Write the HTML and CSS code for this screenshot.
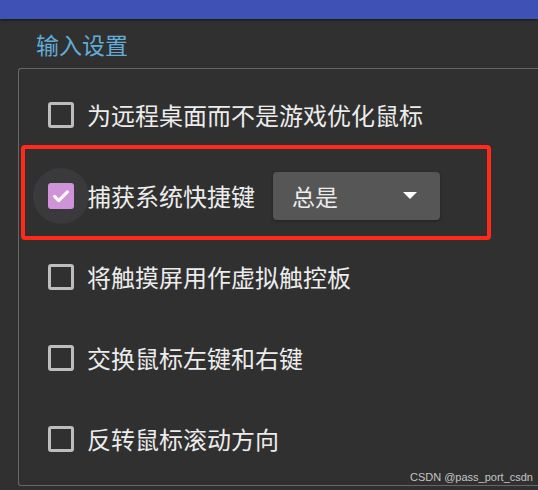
FILE: index.html
```html
<!DOCTYPE html>
<html lang="zh">
<head>
<meta charset="utf-8">
<link rel="stylesheet" href="styles.css">
</head>
<body>
<div class="appbar"></div>
<div class="title">输入设置</div>
<div class="group">
  <div class="row">
    <span class="box"></span>
    <span class="label">为远程桌面而不是游戏优化鼠标</span>
  </div>
  <div class="row">
    <span class="box-wrap">
      <span class="ripple"></span>
      <span class="box checked">
        <svg viewBox="0 0 24 24" width="22" height="22"><path d="M5 12.5l4.5 4.5L19 7.5" fill="none" stroke="#fff" stroke-width="3.4" stroke-linecap="round" stroke-linejoin="round"/></svg>
      </span>
    </span>
    <span class="label">捕获系统快捷键</span>
    <div class="select">
      <span class="select-text">总是</span>
      <span class="arrow"></span>
    </div>
  </div>
  <div class="row">
    <span class="box"></span>
    <span class="label">将触摸屏用作虚拟触控板</span>
  </div>
  <div class="row">
    <span class="box"></span>
    <span class="label">交换鼠标左键和右键</span>
  </div>
  <div class="row">
    <span class="box"></span>
    <span class="label">反转鼠标滚动方向</span>
  </div>
</div>
<div class="highlight"></div>
<div class="watermark">CSDN @pass_port_csdn</div>
</body>
</html>
```

FILE: styles.css
```css
html, body {
  margin: 0;
  padding: 0;
}
body {
  background: #303030;
  width: 538px;
  height: 490px;
  overflow: hidden;
  position: relative;
  font-family: "Noto Sans CJK SC", "Noto Sans", sans-serif;
  color: #ececec;
}
.appbar {
  height: 19px;
  background: #3f51b5;
  box-shadow: 0 1px 3px rgba(0,0,0,0.6);
}
.title {
  margin-left: 36px;
  margin-top: 10px;
  height: 39px;
  font-size: 23px;
  line-height: 30px;
  color: #62acd8;
}
.group {
  margin-left: 18px;
  border: 1px solid #676767;
  border-right: none;
  border-radius: 3px 0 0 3px;
  padding: 5px 0 6px 29px;
}
.row {
  height: 81px;
  display: flex;
  align-items: center;
}
.box {
  width: 26px;
  height: 26px;
  box-sizing: border-box;
  border: 3px solid #bdbdbd;
  border-radius: 3px;
  margin-right: 13px;
  flex: none;
}
.box-wrap {
  position: relative;
  display: flex;
  align-items: center;
}
.ripple {
  position: absolute;
  left: -15px;
  top: -15px;
  width: 56px;
  height: 56px;
  border-radius: 50%;
  background: #3a393c;
}
.box.checked {
  position: relative;
  background: #ce93d8;
  border: none;
  display: flex;
  align-items: center;
  justify-content: center;
}
.label {
  font-size: 24px;
  line-height: 30px;
}
.select {
  margin-left: 18px;
  width: 167px;
  height: 48px;
  background: #565656;
  border-radius: 4px;
  box-shadow: 0 1px 3px rgba(0,0,0,0.35);
  display: flex;
  align-items: center;
  justify-content: space-between;
  padding: 0 23px 0 19px;
  box-sizing: border-box;
}
.select-text {
  font-size: 23px;
  line-height: 30px;
}
.arrow {
  width: 0;
  height: 0;
  border-left: 7px solid transparent;
  border-right: 7px solid transparent;
  border-top: 7px solid #ffffff;
}
.highlight {
  position: absolute;
  left: 21px;
  top: 145px;
  width: 470px;
  height: 95px;
  box-sizing: border-box;
  border: 4px solid #ff2a1a;
  border-radius: 4px;
}
.watermark {
  position: absolute;
  right: 5px;
  top: 471px;
  font-family: "Liberation Sans", Arial, sans-serif;
  font-size: 11px;
  line-height: 13px;
  color: #c4c4c4;
}
```
